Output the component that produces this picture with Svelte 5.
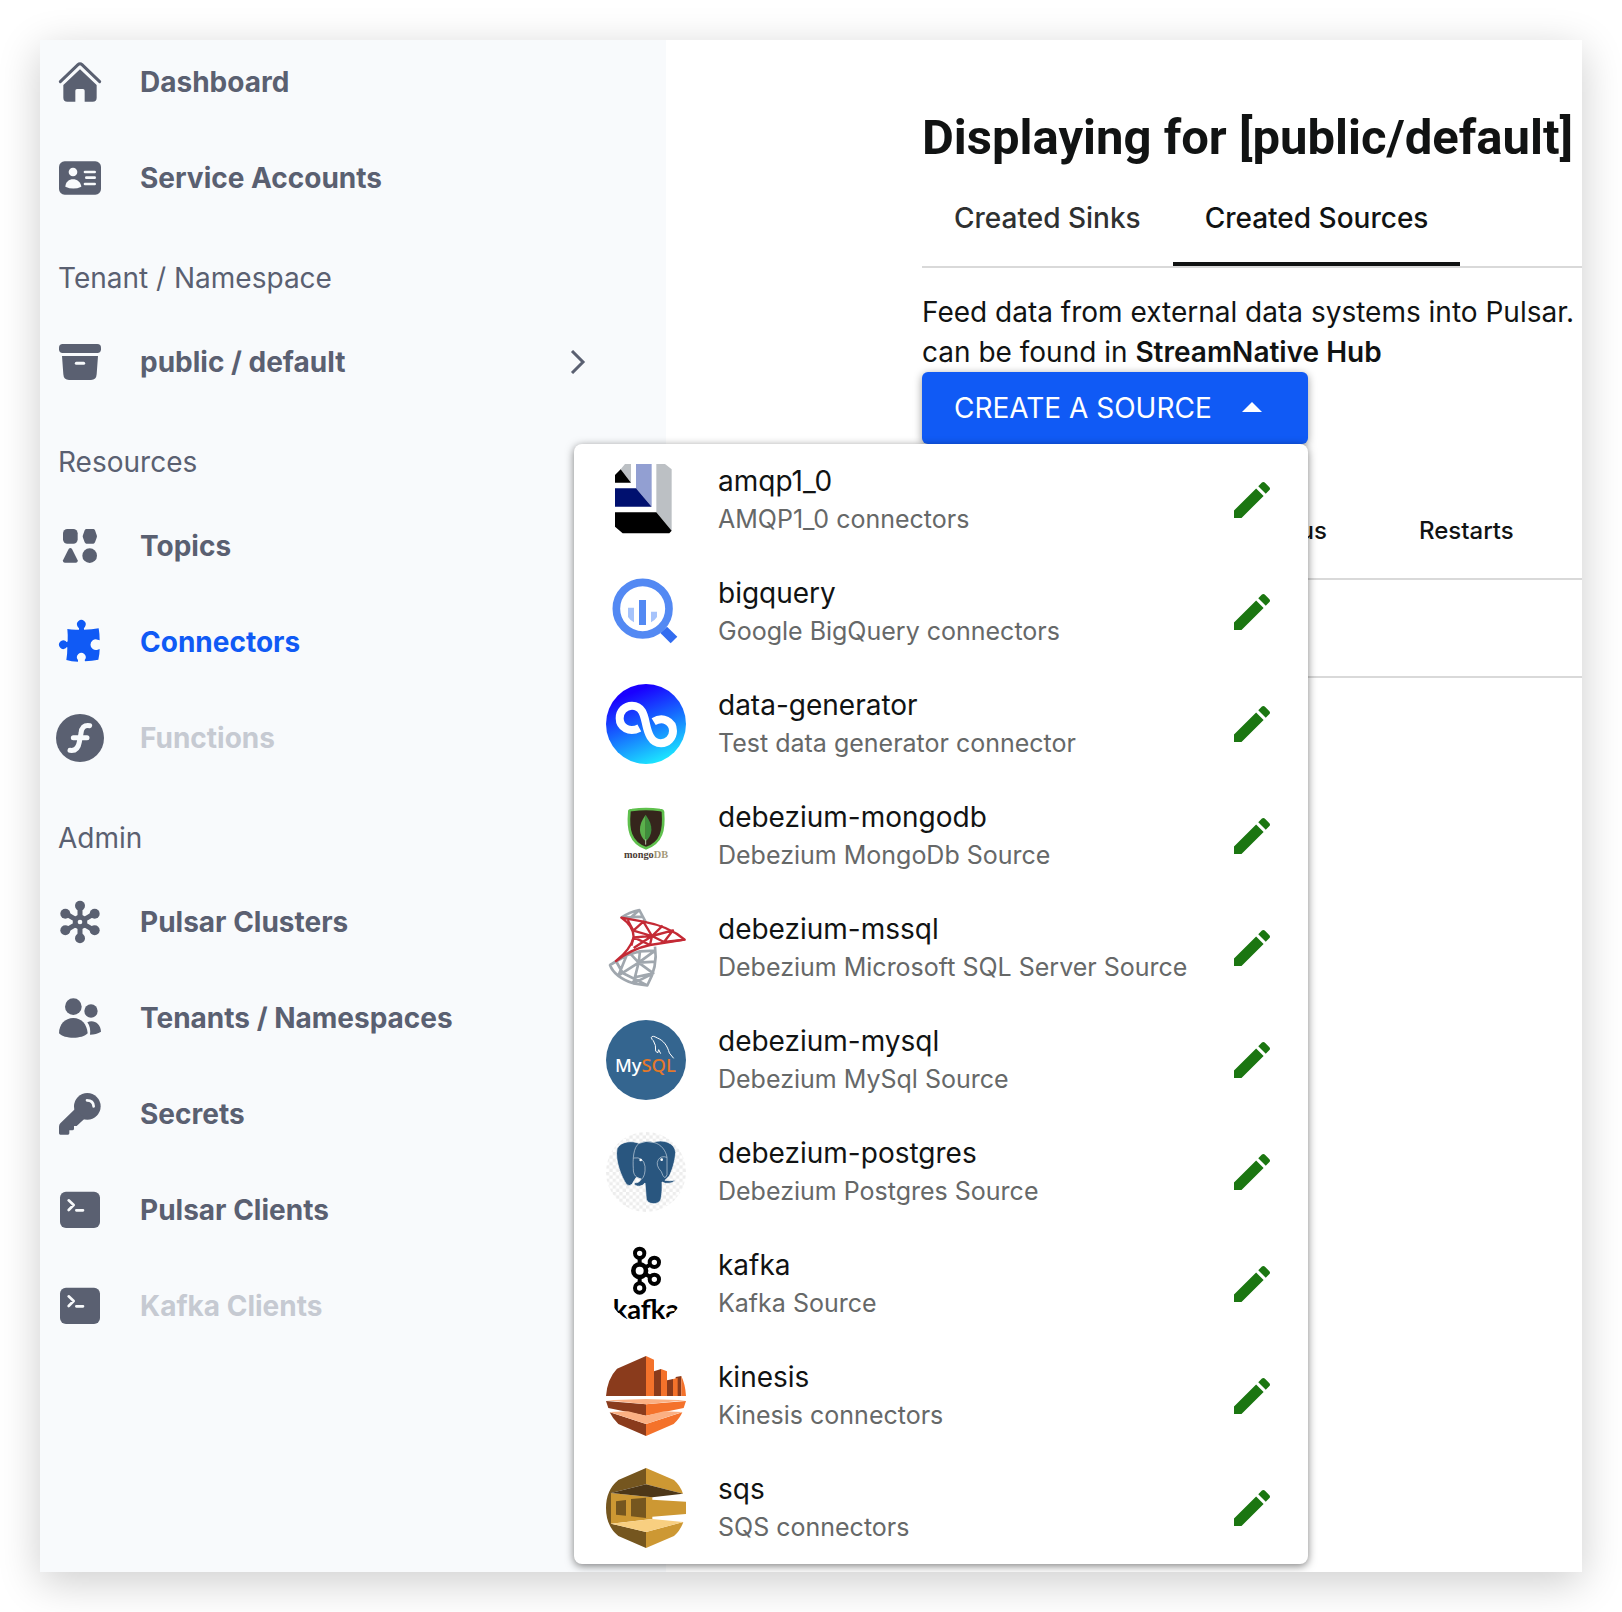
<script>
	let open = true
	let tab = "sources"

	const groups = [
		{
			title: "",
			items: [
				{ label: "Dashboard", icon: "home" },
				{ label: "Service Accounts", icon: "card" }
			]
		},
		{
			title: "Tenant / Namespace",
			items: [{ label: "public / default", icon: "archive", arrow: true }]
		},
		{
			title: "Resources",
			items: [
				{ label: "Topics", icon: "shapes" },
				{ label: "Connectors", icon: "puzzle", active: true },
				{ label: "Functions", icon: "function", disabled: true }
			]
		},
		{
			title: "Admin",
			items: [
				{ label: "Pulsar Clusters", icon: "cluster" },
				{ label: "Tenants / Namespaces", icon: "people" },
				{ label: "Secrets", icon: "key" },
				{ label: "Pulsar Clients", icon: "terminal" },
				{ label: "Kafka Clients", icon: "terminal", disabled: true }
			]
		}
	]

	const sources = [
		{ name: "amqp1_0", info: "AMQP1_0 connectors" },
		{ name: "bigquery", info: "Google BigQuery connectors" },
		{ name: "data-generator", info: "Test data generator connector" },
		{ name: "debezium-mongodb", info: "Debezium MongoDb Source" },
		{ name: "debezium-mssql", info: "Debezium Microsoft SQL Server Source" },
		{ name: "debezium-mysql", info: "Debezium MySql Source" },
		{ name: "debezium-postgres", info: "Debezium Postgres Source" },
		{ name: "kafka", info: "Kafka Source" },
		{ name: "kinesis", info: "Kinesis connectors" },
		{ name: "sqs", info: "SQS connectors" }
	]
</script>

<div class="window">
	<nav>
		{#each groups as group}
			{#if group.title}<h2>{group.title}</h2>{/if}
			{#each group.items as item}
				<a href="#top" class:active={item.active} class:disabled={item.disabled}>
					<svg class="icon" viewBox="0 0 144 144" aria-hidden="true">
						{#if item.icon === "home"}
							<path d="M13 71 L66 20 Q72 14 78 20 L131 71" fill="none" stroke="currentColor" stroke-width="9" stroke-linecap="round" />
							<path d="M72 34 L122 81 V119 Q122 131 110 131 H86 V98 Q86 93 81 93 H63 Q58 93 58 98 V131 H34 Q22 131 22 119 V81 Z" />
						{:else if item.icon === "card"}
							<rect x="9" y="22" width="126" height="100" rx="17" />
							<g class="cut">
								<circle cx="51" cy="54" r="13" />
								<path d="M28 98 C29 84 39 76 51 76 S74 84 76 98 Q52 109 28 98 Z" />
								<path d="M87 54 H116 M91 71 H116 M87 90 H116" class="cutline" stroke-width="8" />
							</g>
						{:else if item.icon === "archive"}
							<rect x="9" y="18" width="126" height="27" rx="11" />
							<path d="M18 54 H126 L122 109 Q121 126 105 126 H39 Q23 126 22 109 Z" />
							<path d="M61 76 H83" class="cutline" stroke-width="9" />
						{:else if item.icon === "shapes"}
							<rect x="21" y="21" width="44" height="44" rx="13" />
							<path d="M91 21 H112 Q115 21 117 25 L122 39 Q124 43 122 47 L117 61 Q115 65 112 65 H91 Q88 65 86 61 L81 47 Q79 43 81 39 L86 25 Q88 21 91 21 Z" />
							<path d="M38 81 Q43 75 48 81 L65 115 Q66 122 59 122 H27 Q20 122 21 115 Z" />
							<circle cx="101" cy="101" r="22" />
						{:else if item.icon === "puzzle"}
							<path d="M34 33 Q50 36 69 35 Q71 30 65 26 A13 13 0 1 1 87 26 Q82 30 84 35 Q108 35 128 31 Q131 48 131 67 L125 65 A16 16 0 1 0 125 95 L131 93 Q131 108 127 125 Q108 129 87 130 L86 126 A13 13 0 1 0 66 126 L66 131 Q46 131 31 126 Q34 110 34 88 Q31 86 29 91 A13 13 0 1 1 29 69 Q32 74 35 70 Q36 52 34 33 Z" />
						{:else if item.icon === "function"}
							<circle cx="72" cy="72" r="72" />
							<path d="M101 35 C84 32 76 42 75 58 L70 84 C67 103 57 111 42 109 M52 71 H93" class="cutline" stroke-width="15" />
						{:else if item.icon === "cluster"}
							<path d="M72 21 V123 M28 46 L116 98 M28 98 L116 46" fill="none" stroke="currentColor" stroke-width="15" />
							<circle cx="72" cy="72" r="22" />
							{#each [[72, 23], [72, 121], [28, 47], [116, 97], [28, 97], [116, 47]] as [x, y]}
								<circle cx={x} cy={y} r="15" />
							{/each}
							<circle class="cut" cx="72" cy="72" r="7" />
						{:else if item.icon === "people"}
							<circle cx="52" cy="38" r="25" />
							<circle cx="105" cy="51" r="20" />
							<path d="M9 118 C9 91 27 72 52 72 S93 91 95 118 C79 136 25 136 9 118 Z" />
							<path d="M94 85 C112 76 134 88 135 113 C126 119 114 121 102 122 C104 108 102 96 94 85 Z" />
						{:else if item.icon === "key"}
							<circle cx="94" cy="49" r="40" />
							<path d="M57 57 L13 100 Q9 104 9 110 V130 Q9 134 13 134 H36 Q40 134 40 130 V121 H49 Q54 121 54 116 V108 H62 L88 84 Z" />
							<path d="M93 31 Q112 31 113 49" class="cutline" stroke-width="8" />
						{:else}
							<rect x="12" y="17" width="120" height="109" rx="18" />
							<path d="M38 43 L53 57 L38 72 M61 73 H81" class="cutline" stroke-width="8" />
						{/if}
					</svg>
					<span>{item.label}</span>
					{#if item.arrow}
						<svg class="arrow" viewBox="0 0 24 24" aria-hidden="true"><path d="M6 1 L17 12 L6 23" fill="none" stroke="currentColor" stroke-width="3" /></svg>
					{/if}
				</a>
			{/each}
		{/each}
	</nav>

	<main>
		<h1>Displaying for [public/default]</h1>
		<div class="tabs" role="tablist">
			<button role="tab" aria-selected={tab === "sinks"} class:selected={tab === "sinks"} on:click={() => tab = "sinks"}>Created Sinks</button>
			<button role="tab" aria-selected={tab === "sources"} class:selected={tab === "sources"} on:click={() => tab = "sources"}>Created Sources</button>
		</div>
		<p>
			Feed data from external data systems into Pulsar.<br>
			can be found in <a href="#hub">StreamNative Hub</a>
		</p>
		<div class="dropdown">
			<button class="create" on:click={() => open = !open}>
				CREATE A SOURCE
				<svg viewBox="0 0 48 48" aria-hidden="true"><path d="M14 28 L24 18 L34 28 Z" /></svg>
			</button>
			{#if open}
				<ul>
					{#each sources as source}
						<li>
							<svg class="logo" viewBox="0 0 240 240" aria-hidden="true">
								{#if source.name === "amqp1_0"}
									<path fill="#bcc0c4" d="M44 28 L57 12 H75 V68 Z M151 12 H177 L197 28 V212 L151 157 Z" />
									<path d="M27 45 L44 28 L75 68 H27 Z M27 157 H151 L197 212 L190 220 H50 L27 200 Z" />
									<path fill="#929fd2" d="M90 12 H137 V140 L90 85 Z" />
									<path fill="#00106f" d="M27 85 H90 L137 140 H27 Z" />
								{:else if source.name === "bigquery"}
									<path fill="#326cf0" d="M183 164 L214 194 L194 214 L163 183 Z" />
									<circle cx="110" cy="110" r="79" fill="none" stroke="#5389f3" stroke-width="23" />
									<path fill="#a6c3fb" d="M66 107 H84 V151 Q73 146 66 135 Z M135 119 H153 V135 Q146 146 135 151 Z" />
									<path fill="#5389f3" d="M99 84 H120 V159 H99 Z" />
								{:else if source.name === "data-generator"}
									<defs>
										<linearGradient id="sky" x1=".3" y1="0" x2=".7" y2="1">
											<stop offset=".1" stop-color="#1a00ff" />
											<stop offset=".5" stop-color="#1668ff" />
											<stop offset="1" stop-color="#1cf0ff" />
										</linearGradient>
									</defs>
									<circle cx="120" cy="120" r="120" fill="url(#sky)" />
									<path d="M100 132 C70 148 41 130 41 103 A37 37 0 0 1 78 65 C110 65 115 97 120 120 C126 147 135 178 165 178 A37 37 0 0 0 201 141 C201 111 170 97 143 113" fill="none" stroke="#fff" stroke-width="24" />
								{:else if source.name === "debezium-mongodb"}
									<path d="M70 48 Q68 42 78 42 Q120 36 162 42 Q172 42 171 50 C175 100 168 140 120 157 C72 140 65 100 70 48 Z" fill="#35251c" stroke="#5fc04d" stroke-width="8" />
									<path d="M119 56 C94 90 98 118 119 136 Z" fill="#5bb04c" />
									<path d="M119 56 C144 90 140 118 119 136 Z" fill="#3e8e3c" />
									<path d="M119 130 V146" stroke="#b5c8a8" stroke-width="3" />
									<text x="120" y="187" class="mongo">mongo<tspan fill="#a39778">DB</tspan></text>
								{:else if source.name === "debezium-mssql"}
									<g fill="none" stroke="#a0a7ae" stroke-width="8" stroke-linejoin="round">
										<path d="M46 29 Q70 12 100 6 L120 44 M46 29 L112 26 M66 36 L100 6" />
										<path d="M30 159 L12 171 Q25 207 82 226 L124 232 Q156 176 147 116 M12 171 L62 142 L102 130 L147 128 M30 159 L50 195 L98 164 L150 161 M37 203 L62 142 M37 203 L98 164 L82 226 M50 195 L124 232 M70 134 L98 164 L102 130 M98 164 L142 196 L90 207 M98 164 L147 128 M142 196 L82 226" />
									</g>
									<g fill="none" stroke="#c42a35" stroke-width="7" stroke-linejoin="round">
										<path d="M46 29 L112 41 Q190 55 236 95 L132 111 Q76 123 30 159 Q74 124 83 88 Q83 55 46 29 Z" />
										<path d="M65 36 L82 68 L112 41 L138 84 L83 88 L76 113 M82 68 L138 84 L201 67 L174 102 L138 84 L132 111 M138 84 L170 53 M138 84 L83 120 M83 88 L132 111 M174 102 L236 95" />
									</g>
								{:else if source.name === "debezium-mysql"}
									<circle cx="120" cy="120" r="120" fill="#34658f" />
									<path d="M203 115 L190 99 C184 78 174 62 154 54 Q139 45 136 52 Q137 59 142 62 L148 76 L149 93 L155 99 L158 89 L164 101" fill="none" stroke="#fff" stroke-width="3" />
									<text x="118" y="156" class="mysql">My<tspan fill="#e4782a">SQL</tspan></text>
								{:else if source.name === "debezium-postgres"}
									<defs>
										<pattern id="checks" width="20" height="20" patternUnits="userSpaceOnUse">
											<path d="M0 0 H10 V10 H0 Z M10 10 H20 V20 H10 Z" fill="#ededed" />
										</pattern>
									</defs>
									<circle cx="120" cy="120" r="120" fill="url(#checks)" />
									<path d="M33 50 C45 27 78 25 99 34 Q120 24 142 31 C170 20 207 32 209 61 C207 90 198 116 190 132 L177 145 Q194 148 208 144 Q202 155 178 154 L168 150 C169 175 167 193 164 204 C156 220 125 218 121 202 L117 153 Q103 170 85 158 V152 Q100 154 105 141 L91 136 Q84 146 78 157 Q70 164 62 158 C46 135 26 84 33 50 Z" fill="#29567f" stroke="#fff" stroke-width="2" />
									<path d="M99 34 C82 46 80 82 82 110 C81 130 92 138 106 142 Q119 132 117 103 Q113 73 82 78 M142 31 C166 36 180 57 183 76 V128 Q176 149 166 119 Q147 99 157 83 Q165 70 183 76" fill="none" stroke="#c8d5df" stroke-width="2" />
									<circle cx="104" cy="84" r="4" fill="#fff" />
									<circle cx="167" cy="83" r="4" fill="#fff" />
								{:else if source.name === "kafka"}
									<clipPath id="round"><circle cx="120" cy="120" r="120" /></clipPath>
									<g fill="#fff" stroke="#000" stroke-width="12">
										<path d="M101 28 V132 M101 80 L145 55 M101 80 L145 106" />
										<circle cx="101" cy="28" r="14" />
										<circle cx="145" cy="55" r="14" />
										<circle cx="145" cy="106" r="14" />
										<circle cx="101" cy="132" r="14" />
										<circle cx="101" cy="80" r="19" stroke-width="14" />
									</g>
									<g clip-path="url(#round)"><text x="120" y="224" class="kafka">kafka</text></g>
								{:else if source.name === "kinesis"}
									<path fill="#8a3b1c" d="M120 0 V120 H0 Q4 68 33 38 Z M144 46 L165 39 V120 H144 Z M183 73 L201 69 V120 H183 Z M209 63 L226 60 V120 H209 Z M0 135 L120 145 V179 L7 156 Z M11 169 L120 204 V240 L37 204 Q20 188 11 169 Z" />
									<path fill="#f4722b" d="M120 0 L144 11 V120 H120 Z M165 39 L183 46 V120 H165 Z M201 69 L215 66 V120 H201 Z M226 60 Q238 85 240 120 H226 Z M120 145 L240 135 L233 156 L120 179 Z M120 204 L229 169 Q221 188 203 204 L120 240 Z" />
									<path fill="#fbb083" d="M0 133 L120 129 L240 133 L120 145 Z M11 168 L66 166 L120 179 L174 166 L229 168 L120 204 Z" />
								{:else}
									<path fill="#75561f" d="M120 0 V49 L15 75 V167 L120 192 V240 L37 204 Q0 174 0 120 T37 36 Z" />
									<path fill="#cd9833" d="M120 0 L204 36 Q223 53 231 77 L120 49 Z M15 75 L139 88 V95 L240 101 V138 L139 146 V153 L15 167 Z M120 192 L232 162 Q223 188 204 204 L120 240 Z" />
									<path fill="#4d3718" d="M120 49 L231 77 L139 88 L15 75 Z" />
									<path fill="#f8cf80" d="M15 167 L139 153 L232 162 L120 192 Z" />
									<path fill="#75561f" d="M30 100 L60 96 V143 L30 140 Z M75 93 L120 89 V150 L75 145 Z" />
								{/if}
							</svg>
							<div class="text">
								<span class="name">{source.name}</span>
								<span class="info">{source.info}</span>
							</div>
							<button class="edit" aria-label="Edit {source.name}">
								<svg viewBox="0 0 24 24" aria-hidden="true"><path d="M3 17.25V21h3.75L17.81 9.94l-3.75-3.75L3 17.25zM20.71 7.04c.39-.39.39-1.02 0-1.41l-2.34-2.34c-.39-.39-1.02-.39-1.41 0l-1.83 1.83 3.75 3.75 1.83-1.83z" /></svg>
							</button>
						</li>
					{/each}
				</ul>
			{/if}
		</div>
		<table>
			<thead>
				<tr><th class="first"></th><th class="status">Status</th><th>Restarts</th></tr>
			</thead>
			<tbody>
				<tr><td colspan="3"></td></tr>
			</tbody>
		</table>
	</main>
</div>

<style>
	:global(body) {
		background: #fff;
		font-family: Inter, "Liberation Sans", sans-serif;
		font-size: 28px;
		color: #111313;
	}
	:global(*) {
		box-sizing: border-box;
	}
	button {
		border: none;
		background: none;
		padding: 0;
		font: inherit;
		color: inherit;
		cursor: pointer;
	}
	.window {
		display: flex;
		margin: 40px;
		min-height: calc(100vh - 80px);
		overflow: hidden;
		background: #fff;
		box-shadow: 0 10px 40px rgba(0, 0, 0, 0.2);
	}
	nav {
		flex: 0 0 626px;
		background: #f8fafc;
		color: #5a6071;
	}
	nav h2 {
		height: 88px;
		margin: 0;
		padding: 4px 18px 0;
		font-size: 28px;
		font-weight: 400;
		line-height: 84px;
	}
	nav a {
		display: flex;
		align-items: center;
		gap: 36px;
		height: 84px;
		margin-bottom: 12px;
		padding: 0 76px 0 16px;
		color: inherit;
		font-weight: 700;
		text-decoration: none;
	}
	nav a.active {
		color: #105af5;
	}
	nav a.disabled span {
		color: #c6cad2;
	}
	.icon {
		width: 48px;
		height: 48px;
		fill: currentColor;
	}
	.cut {
		fill: #f8fafc;
	}
	.cutline {
		fill: none;
		stroke: #f8fafc;
		stroke-linecap: round;
		stroke-linejoin: round;
	}
	.arrow {
		width: 24px;
		height: 24px;
		margin-left: auto;
	}
	main {
		flex: 1;
		min-width: 0;
		padding: 66px 0 0 256px;
		white-space: nowrap;
	}
	h1 {
		margin: 0;
		font-family: Roboto, "Liberation Sans", sans-serif;
		font-size: 49px;
		line-height: 64px;
	}
	.tabs {
		display: flex;
		border-bottom: 2px solid #d9d9d9;
	}
	.tabs button {
		height: 96px;
		padding: 4px 32px 0;
		border-bottom: 4px solid transparent;
		font-weight: 500;
		color: #2f3131;
	}
	.tabs button.selected {
		border-color: #111313;
		color: #111313;
	}
	p {
		margin: 24px 0 0;
		line-height: 40px;
	}
	p a {
		color: inherit;
		font-weight: 600;
		text-decoration: none;
	}
	.dropdown {
		position: relative;
		width: 386px;
	}
	.create {
		display: flex;
		align-items: center;
		justify-content: space-between;
		width: 100%;
		height: 72px;
		padding: 0 32px;
		border-radius: 6px;
		background: #105af5;
		box-shadow: 0 2px 8px rgba(0, 0, 0, 0.4);
		color: #fff;
	}
	.create svg {
		width: 48px;
		height: 48px;
		fill: #fff;
	}
	ul {
		position: absolute;
		top: 100%;
		right: 0;
		width: 734px;
		margin: 0;
		padding: 0;
		list-style: none;
		background: #fff;
		border-radius: 8px;
		box-shadow: 0 2px 8px rgba(0, 0, 0, 0.5);
	}
	li {
		display: flex;
		align-items: center;
		height: 112px;
		padding: 0 32px;
	}
	.logo {
		width: 80px;
		height: 80px;
		margin-right: 32px;
	}
	.mongo {
		font: bold 31px "Liberation Serif", serif;
		fill: #4a3b35;
		text-anchor: middle;
	}
	.mysql {
		font: 500 55px "Noto Sans", sans-serif;
		fill: #fff;
		text-anchor: middle;
	}
	.kafka {
		font: bold 82px Lato, sans-serif;
		text-anchor: middle;
	}
	.text {
		display: flex;
		flex: 1;
		flex-direction: column;
	}
	.name,
	.info {
		line-height: 38px;
	}
	.info {
		font-size: 25px;
		color: #666868;
	}
	.edit {
		display: flex;
	}
	.edit svg {
		width: 48px;
		height: 48px;
		fill: #1b7611;
	}
	table {
		width: 100%;
		margin-top: 40px;
		border-collapse: collapse;
	}
	th {
		height: 95px;
		padding: 0 0 2px 32px;
		border-bottom: 2px solid #d9d9d9;
		font-size: 24px;
		font-weight: 500;
		text-align: left;
	}
	th.first {
		width: 300px;
	}
	th.status {
		width: 165px;
	}
	td {
		height: 98px;
		border-bottom: 2px solid #d9d9d9;
	}
</style>
